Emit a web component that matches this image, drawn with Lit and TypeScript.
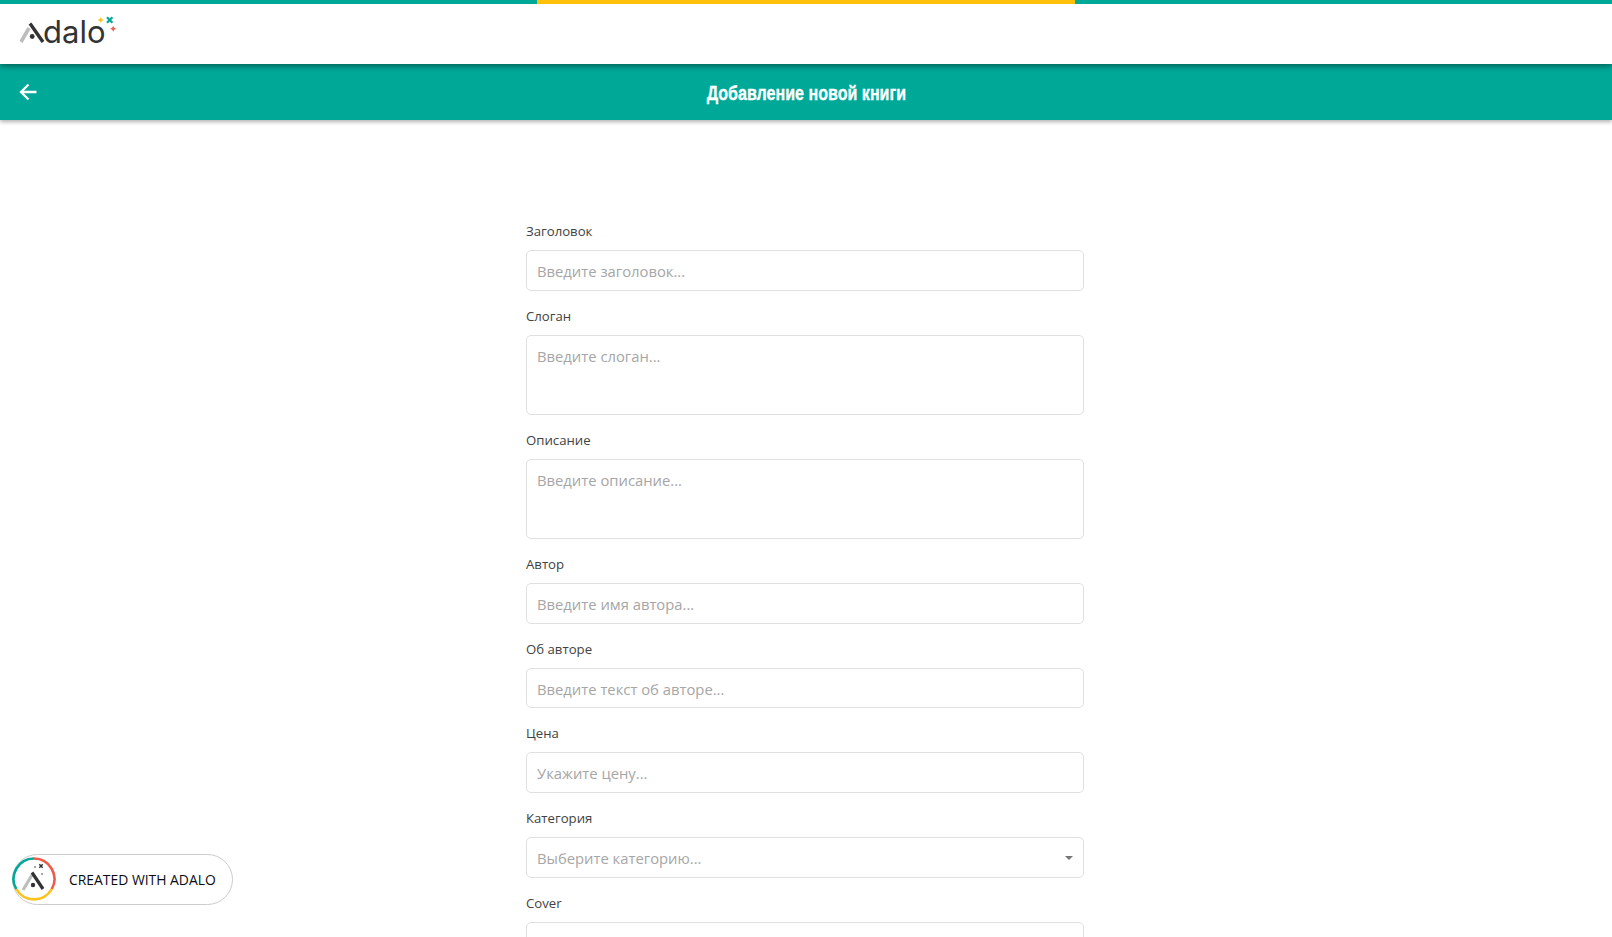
import { LitElement, html, css, svg } from "lit";
import { customElement } from "lit/decorators.js";

type Field = { label: string; placeholder: string; area?: boolean; select?: boolean; short?: boolean };

const FIELDS: Field[] = [
  { label: "Заголовок", placeholder: "Введите заголовок..." },
  { label: "Слоган", placeholder: "Введите слоган...", area: true },
  { label: "Описание", placeholder: "Введите описание...", area: true },
  { label: "Автор", placeholder: "Введите имя автора..." },
  { label: "Об авторе", placeholder: "Введите текст об авторе...", short: true },
  { label: "Цена", placeholder: "Укажите цену..." },
  { label: "Категория", placeholder: "Выберите категорию...", select: true },
  { label: "Cover", placeholder: "" },
];

const sparkles = svg`
  <path d="M100.7 17l1 2 2 1-2 1-1 2-1-2-2-1 2-1z" fill="#fdc21d"/>
  <path d="M107 17.3l5.4 5.4M112.4 17.3l-5.4 5.4" stroke="#00a898" stroke-width="2.2" fill="none"/>
  <path d="M113.2 25.8l1 2 2 1-2 1-1 2-1-2-2-1 2-1z" fill="#ee5b4b"/>
`;

@customElement("app-root")
export class AppRoot extends LitElement {
  static styles = css`
    :host {
      display: block;
      height: 937px;
      overflow: hidden;
      position: relative;
      background: #fff;
      font-family: "Open Sans", "Noto Sans", sans-serif;
    }
    .head {
      position: relative;
      z-index: 1;
      background: #fff;
      box-shadow: 0 2px 6px rgba(0, 0, 0, 0.45);
    }
    .stripe {
      display: grid;
      grid-template-columns: 537px 538px 1fr;
      height: 4px;
    }
    .teal { background: #00a898; }
    .yellow { background: #ffc00a; }
    .top {
      height: 60px;
      box-sizing: border-box;
      padding: 9px 0 0 43px;
    }
    .mark { position: absolute; left: 0; top: 0; }
    .logo-text {
      display: block;
      font-family: "Inter", sans-serif;
      font-size: 31px;
      line-height: 38px;
      color: #333;
    }
    .bar {
      height: 56px;
      background: #00a898;
      display: flex;
      align-items: center;
      justify-content: center;
      position: relative;
      box-shadow: 0 2px 4px rgba(0, 0, 0, 0.3);
    }
    .back {
      position: absolute;
      left: 18px;
      top: 18px;
      width: 20px;
      height: 20px;
    }
    .title {
      color: #fff;
      font-family: "Liberation Sans", sans-serif;
      font-weight: 700;
      font-size: 21px;
      line-height: 28px;
      margin-top: 1px;
      white-space: nowrap;
      transform: scaleX(0.765);
      -webkit-text-stroke: 0.35px #fff;
    }
    .form {
      width: 558px;
      margin: 102px 0 0 526px;
      display: flex;
      flex-direction: column;
      gap: 16px;
    }
    .field { display: flex; flex-direction: column; }
    .label {
      font-size: 13.2px;
      line-height: 18px;
      height: 19px;
      color: #424242;
      margin-bottom: 9px;
    }
    .box {
      box-sizing: border-box;
      height: 41px;
      border: 1px solid #e0e0e0;
      border-radius: 5px;
      padding: 10px;
      font-size: 14.8px;
      line-height: 20px;
      color: #a6a6a6;
      background: #fff;
      position: relative;
    }
    .box.area { height: 80px; }
    .box.short { height: 40px; }
    .caret {
      position: absolute;
      right: 10px;
      top: 18px;
      width: 0;
      height: 0;
      border-left: 4.5px solid transparent;
      border-right: 4.5px solid transparent;
      border-top: 4.5px solid #757575;
    }
    .badge {
      position: absolute;
      left: 12px;
      top: 854px;
      width: 221px;
      height: 51px;
      box-sizing: border-box;
      border: 1px solid #ccc;
      border-radius: 26px;
      background: #fff;
      display: flex;
      align-items: center;
    }
    .badge svg { position: absolute; left: -1px; top: 2px; }
    .badge-text {
      margin-left: 56px;
      font-size: 13.9px;
      line-height: 20px;
      color: #0b0b14;
      white-space: nowrap;
    }
  `;

  render() {
    return html`
      <div class="head">
        <div class="stripe"><div class="teal"></div><div class="yellow"></div><div class="teal"></div></div>
        <div class="top">
          <svg class="mark" width="120" height="50" viewBox="0 0 120 50" fill="none">
            <path d="M21 42L29 28" stroke="#bdbdbd" stroke-width="3.6"/>
            <path d="M30 23.5L43 42" stroke="#333" stroke-width="3.4"/>
            <circle cx="32.2" cy="36.5" r="2.4" fill="#333"/>
            ${sparkles}
          </svg>
          <span class="logo-text">dalo</span>
        </div>
      </div>
      <div class="bar">
        <svg class="back" viewBox="0 0 20 20" fill="none" stroke="#fff" stroke-width="2.3">
          <path d="M18.5 10H3.5M10.5 2.5L3 10l7.5 7.5"/>
        </svg>
        <div class="title">Добавление новой книги</div>
      </div>
      <div class="form">
        ${FIELDS.map(
          (f) => html`
            <div class="field">
              <div class="label">${f.label}</div>
              <div class="box ${f.area ? "area" : ""} ${f.short ? "short" : ""}">
                ${f.placeholder}${f.select ? html`<span class="caret"></span>` : ""}
              </div>
            </div>
          `,
        )}
      </div>
      <div class="badge">
        <svg width="44" height="44" viewBox="0 0 44 44" fill="none">
          <circle cx="22" cy="22" r="20.5" fill="#fff"/>
          <path d="M4.3 32.2A20.5 20.5 0 0 1 22 1.5" stroke="#00a898" stroke-width="2.6"/>
          <path d="M22 1.5A20.5 20.5 0 0 1 39.7 32.2" stroke="#ee5b4b" stroke-width="2.6"/>
          <path d="M39.7 32.2A20.5 20.5 0 0 1 4.3 32.2" stroke="#fdc21d" stroke-width="2.6"/>
          <path d="M11 33L20 18" stroke="#bdbdbd" stroke-width="3.2"/>
          <path d="M20 15.5L31 32" stroke="#333" stroke-width="3.2"/>
          <circle cx="21" cy="28" r="2.2" fill="#333"/>
          <path d="M27.3 7.3l3.4 3.4M30.7 7.3l-3.4 3.4" stroke="#333" stroke-width="1.5"/>
          <circle cx="23" cy="10" r="1" fill="#888"/>
          <circle cx="30" cy="17" r="1" fill="#888"/>
        </svg>
        <span class="badge-text">CREATED WITH ADALO</span>
      </div>
    `;
  }
}
